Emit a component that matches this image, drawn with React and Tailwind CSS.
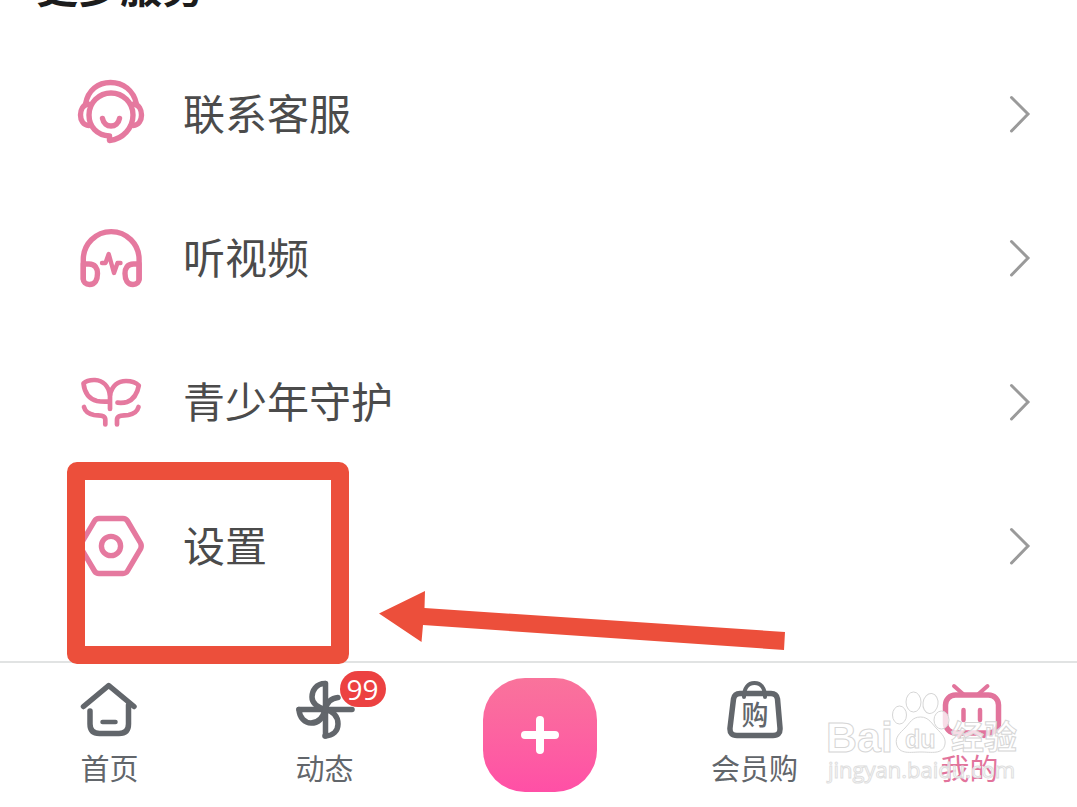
import React from 'react';
import clsx from 'clsx';

function ServiceIcon({ children }) {
  return (
    <svg
      className="w-[72px] h-[72px] shrink-0 text-[#e5799f]"
      viewBox="0 0 72 72"
      fill="none"
      stroke="currentColor"
      strokeWidth="5.4"
      strokeLinecap="round"
      strokeLinejoin="round"
    >
      {children}
    </svg>
  );
}

function TabIcon({ children }) {
  return (
    <svg
      className="w-16 h-16"
      viewBox="0 0 64 64"
      fill="none"
      stroke="currentColor"
      strokeWidth="5.5"
      strokeLinecap="round"
      strokeLinejoin="round"
    >
      {children}
    </svg>
  );
}

const services = [
  {
    label: '联系客服',
    icon: (
      <ServiceIcon>
        <path d="M10.500 26C13 12 23 4.500 35.500 4.500S58.500 12 61.500 26" />
        <path d="M34.500 58C22 57.500 14 48.500 14 37a22 22 0 0 1 44 0C58 50 48 61 34.500 62.500L34.500 58" />
        <path d="M13 26C8 27 5.500 32 5.500 37S8 47 14 47.500" />
        <path d="M59 26C64 27 66.500 32 66.500 37S64 47 58 47.500" />
        <path d="M27.500 40.500c1 5 4.500 7.500 8.500 7.500s7.500-2.500 8.500-7.500" />
      </ServiceIcon>
    ),
  },
  {
    label: '听视频',
    icon: (
      <ServiceIcon>
        <path d="M8.300 57V37.500a27.900 27.900 0 0 1 55.800 0V57" />
        <path d="M8.300 42H14C20 42 22.500 46 22.500 51.500C22.500 58 20 62.500 14.500 62.500C10.500 62.500 8.300 60 8.300 57Z" />
        <path d="M64.100 42H58.500C52.500 42 50 46 50 51.500C50 58 52.500 62.500 58 62.500C62 62.500 64.100 60 64.100 57Z" />
        <path d="M27 41H30.500L33.700 32L39 51L42.500 41H45.500" strokeWidth="4.400" />
      </ServiceIcon>
    ),
  },
  {
    label: '青少年守护',
    icon: (
      <ServiceIcon>
        <path d="M35 43V29C33.500 20 28 14.500 20 14C15 13.800 11 15 8.500 17.500C9.500 26 14 33 22 35C26 35.800 30 35.700 34.500 35.500" strokeWidth="4.700" />
        <path d="M35 29C37 20 43 15 51 15C56 15 61 16.500 63.800 19.500C62.500 27 58.500 33.500 52 36C49 37 46 37 42.500 36.700" strokeWidth="4.700" />
        <path d="M9 41C10 45 14 48 19 49C26 50 30.300 49 30.300 54V58.500" strokeWidth="4.700" />
        <path d="M63.500 41C62.500 45 58 48 53.500 49C46.500 50 42 49 42 54V58.500" strokeWidth="4.700" />
      </ServiceIcon>
    ),
  },
  {
    label: '设置',
    marked: true,
    icon: (
      <ServiceIcon>
        <path d="M24 8.500H48Q51 8.500 52.500 11L65.500 33Q67 36 65.500 39L52.500 61Q51 63.500 48 63.500H24Q21 63.500 19.500 61L6.500 39Q5 36 6.500 33L19.500 11Q21 8.500 24 8.500Z" />
        <circle cx="36" cy="36" r="9.600" />
      </ServiceIcon>
    ),
  },
];

// Red frame and arrow that point the reader at the settings row
function Marker() {
  return (
    <>
      <span className="absolute left-[67px] -top-3 w-[282px] h-[202px] rounded-[10px] border-[18px] border-[#ec4f3b] pointer-events-none" />
      <svg
        className="absolute left-[378px] top-[116px] w-[408px] h-[62px] text-[#ec4f3b] pointer-events-none"
        viewBox="0 0 408 62"
        fill="currentColor"
      >
        <path d="M1 23.500L47 1L46.500 18L407 42L406 60L45 35L43.500 52Z" />
      </svg>
    </>
  );
}

function ServiceRow({ label, icon, marked }) {
  return (
    <li className="relative">
      <button type="button" className="flex items-center w-full h-36 pl-[75px] pr-[46px] text-left">
        {icon}
        <span className="ml-9 pb-1 flex-1 text-[42px] leading-[60px] text-[#4b4b4b]">{label}</span>
        <svg className="w-6 h-10" viewBox="0 0 24 40" fill="none" stroke="#9a9a9a" strokeWidth="3" strokeLinecap="round">
          <path d="M4.500 3.500L21 20L4.500 37" />
        </svg>
      </button>
      {marked && <Marker />}
    </li>
  );
}

function Tab({ label, badge, active, children }) {
  return (
    <button
      type="button"
      className={clsx('flex flex-col items-center pt-0.5', active ? 'text-[#e2749c]' : 'text-[#62666b]')}
    >
      <span className="relative">
        <TabIcon>{children}</TabIcon>
        {badge && (
          <span className="absolute left-[47px] -top-[9px] w-[46px] h-9 rounded-full bg-[#ec4141] text-white text-[28px] leading-9 text-center font-['Open_Sans',sans-serif]">
            {badge}
          </span>
        )}
      </span>
      <span className="mt-1 text-[29px] leading-[38px]">{label}</span>
    </button>
  );
}

function Watermark() {
  return (
    <svg
      className="absolute right-[55px] top-[22px] w-[202px] h-[104px] pointer-events-none"
      viewBox="0 0 202 104"
      fill="#ffffff"
      fillOpacity="0.75"
      stroke="#d6d6d6"
      strokeWidth="1"
      fontWeight="700"
    >
      <ellipse cx="79.500" cy="30" rx="7" ry="9" />
      <ellipse cx="93.500" cy="17" rx="7.500" ry="10" />
      <ellipse cx="110.500" cy="18.500" rx="7.500" ry="10" transform="rotate(8 110.500 18.500)" />
      <ellipse cx="121.500" cy="35" rx="7.500" ry="9" />
      <path d="M100.500 32C109 32 112 39 117 44C122 49 126 53 125 59C123 70 111 67 101 67S79 70 76.500 59C75 52 80 48 85 43C90 38 92 32 100.500 32Z" />
      <text x="6" y="67" fontSize="43" fontFamily="Liberation Sans, sans-serif">Bai</text>
      <text x="85" y="63" fontSize="25" fontFamily="Liberation Sans, sans-serif">du</text>
      <text x="131" y="64" fontSize="33" fontFamily="Noto Sans CJK SC, sans-serif">经验</text>
      <text x="8" y="93" fontSize="22" fontWeight="400" stroke="#dedede" fontFamily="Open Sans, sans-serif">jingyan.baidu.com</text>
    </svg>
  );
}

export default function App() {
  return (
    <div className="flex flex-col min-h-screen overflow-hidden bg-white font-['Noto_Sans_CJK_SC',sans-serif]">
      <main className="relative z-10 flex-1">
        {/* Section title, scrolled mostly out of view */}
        <h2 className="-mt-9 pb-9 pl-9 text-[42px] leading-[42px] font-bold text-[#1c1c1c]">更多服务</h2>
        <ul>
          {services.map((service) => (
            <ServiceRow key={service.label} {...service} />
          ))}
        </ul>
      </main>

      <nav className="relative grid grid-cols-5 pl-0.5 py-[15px] border-t-2 border-[#e1e3e3]">
        <Tab label="首页">
          <path d="M5.500 26.500L30.700 5.500L56 26.500" />
          <path d="M12 31V44Q12 53.500 21.500 53.500H41Q50.500 53.500 50.500 44V25" />
          <path d="M24.500 42H37.500" strokeWidth="4.500" />
        </Tab>
        <Tab label="动态" badge="99">
          <path d="M6 29.500H59" />
          <path d="M32.500 3.500V56" />
          <path d="M32 3.500C23 3.500 19 11 19 17C19 23 24 27 32 29.500" />
          <path d="M6 29.500C6.500 38 12 43 18 43C25 43 30 38 32 29.500" />
          <path d="M32 56C40 56 45 51 45 44C45 36 40 31 32 29.500" />
          <path d="M32 29.500C34 22 39 18 45 17.500" />
        </Tab>
        <button
          type="button"
          aria-label="+"
          className="flex items-center justify-center justify-self-center w-[114px] h-[114px] rounded-[42px] bg-gradient-to-b from-[#f9739b] to-[#ff4fa6]"
        >
          <svg className="w-10 h-10" viewBox="0 0 40 40" stroke="#ffffff" strokeWidth="8" strokeLinecap="round">
            <path d="M5 20H35M20 5V35" />
          </svg>
        </button>
        <Tab label="会员购">
          <path d="M17 13.500H48Q53.500 13.500 54.500 19L57 48Q57.500 55.500 50 55.500H14Q6.500 55.500 7 48L10.500 19Q11.500 13.500 17 13.500Z" />
          <path d="M21 17C21 8 25 3 31.500 3S42 8 42 17" strokeWidth="4" />
          <text
            x="32"
            y="45"
            fontSize="27"
            fontWeight="500"
            textAnchor="middle"
            fill="currentColor"
            stroke="none"
          >
            购
          </text>
        </Tab>
        <Tab label="我的" active>
          <rect x="7.500" y="15" width="53" height="38" rx="10" />
          <path d="M16 6L25 14M49.500 6L40.500 14" strokeWidth="4" />
          <path d="M25.500 30V40M42 30V40M21 54V56M46 54V56" strokeWidth="4.500" />
        </Tab>
        <Watermark />
      </nav>
    </div>
  );
}
